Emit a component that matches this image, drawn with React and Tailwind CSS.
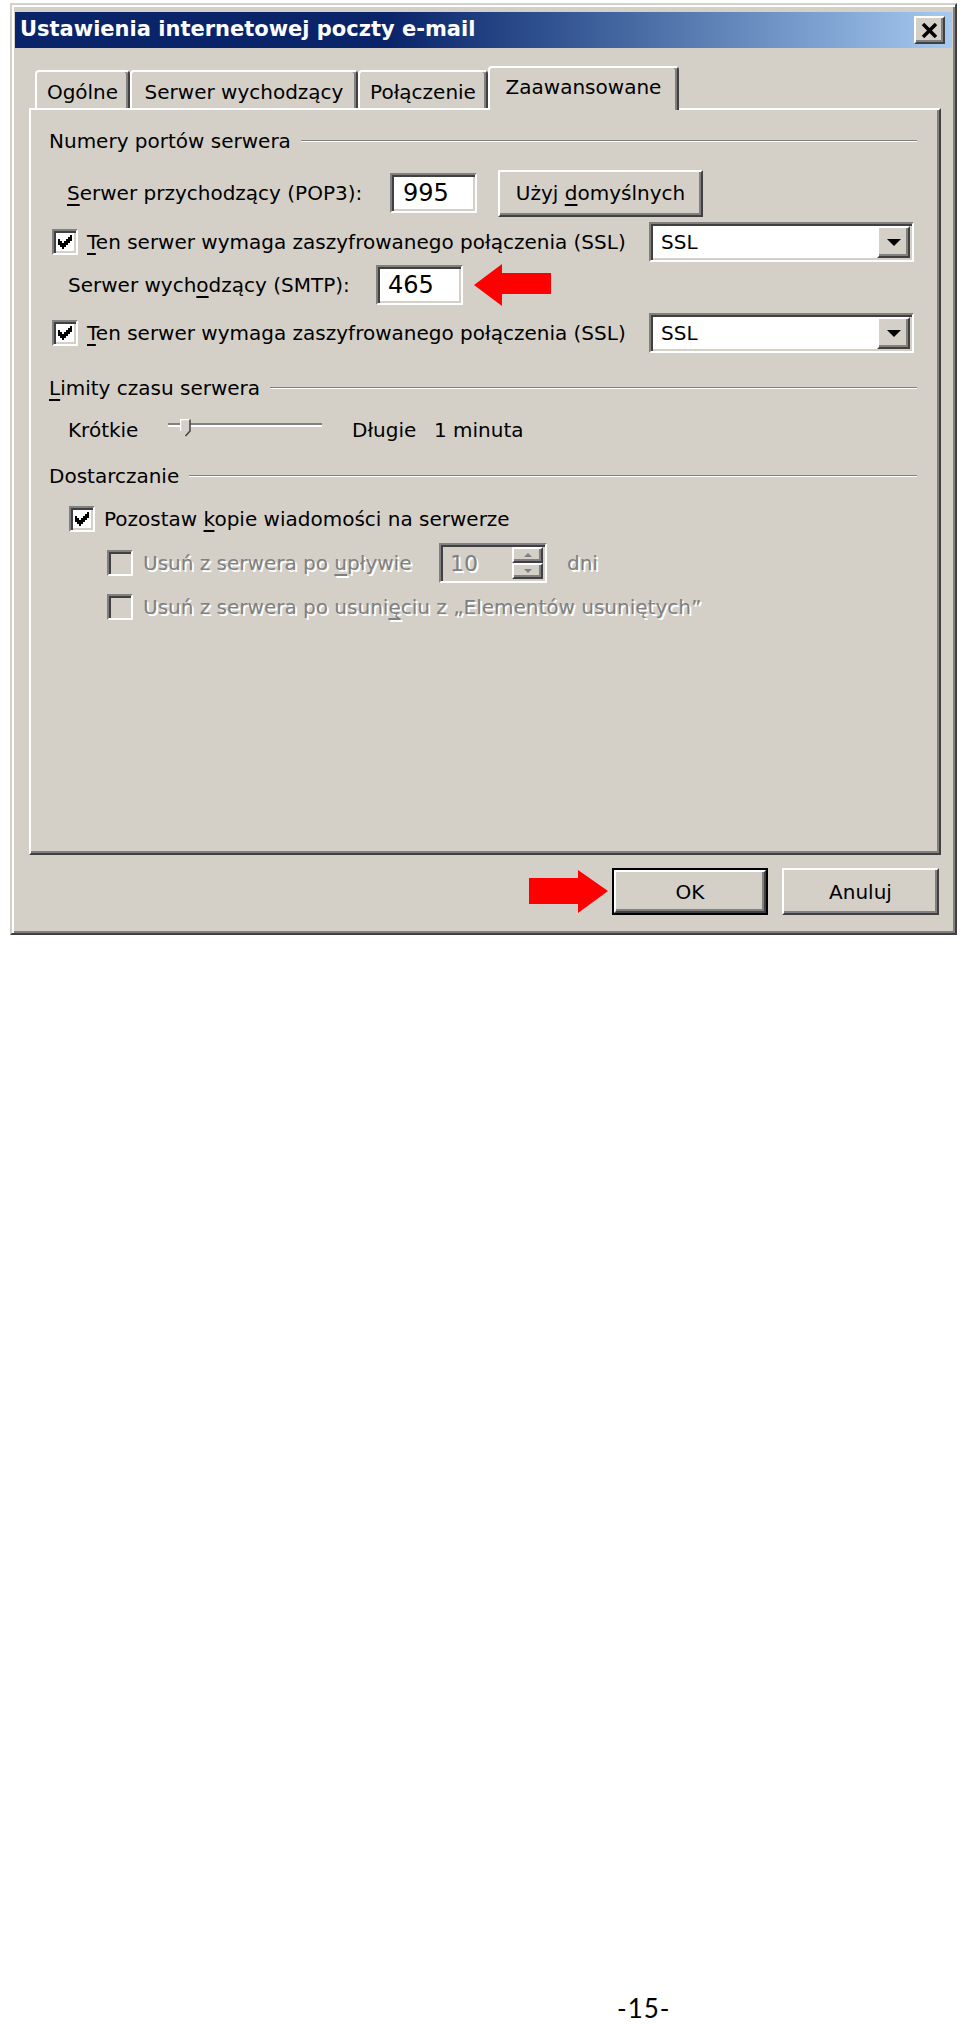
import React from "react";

// klasyczne ramki 3D (Windows 2000)
const raised =
  "border-2 border-t-white border-l-white border-r-[#404040] border-b-[#404040] shadow-[inset_-2px_-2px_0_#808080] bg-[#d4d0c8]";
const sunken =
  "border-2 border-t-[#808080] border-l-[#808080] border-r-white border-b-white shadow-[inset_2px_2px_0_#404040,inset_-2px_-2px_0_#d4d0c8]";
const dis = "text-[#808080] [text-shadow:2px_2px_0_#fff]";

function U({ children }) {
  return <span className="underline decoration-2 underline-offset-[4px]">{children}</span>;
}

function Tick() {
  const tops = [2, 3, 4, 3, 2, 1, 0];
  return (
    <svg width="22" height="22" viewBox="0 0 11 11" shapeRendering="crispEdges" className="block">
      {tops.map((t, i) => (
        <rect key={i} x={2 + i} y={2 + t} width="1" height="3" fill="#000" />
      ))}
    </svg>
  );
}

function Check({ checked, disabled }) {
  return (
    <div className={`w-[26px] h-[26px] shrink-0 ${sunken} ${disabled ? "bg-[#d4d0c8]" : "bg-white"}`}>
      {checked && <Tick />}
    </div>
  );
}

function Group({ children, className }) {
  return (
    <div className={`flex items-center h-[40px] pl-[18px] pr-[22px] ${className}`}>
      <span>{children}</span>
      <div className="flex-1 ml-[10px] border-t border-t-[#808080] border-b border-b-white" />
    </div>
  );
}

function Combo() {
  return (
    <div className={`w-[265px] h-[40px] shrink-0 bg-white ${sunken} flex items-center p-[2px]`}>
      <span className="flex-1 pl-[8px]">SSL</span>
      <div className={`w-[33px] h-full ${raised} flex items-center justify-center`}>
        <svg width="14" height="7" viewBox="0 0 14 7">
          <polygon points="0,0 14,0 7,7" fill="#000" />
        </svg>
      </div>
    </div>
  );
}

function Slider() {
  return (
    <div className="relative w-[154px] h-[40px] shrink-0">
      <div className="absolute left-0 right-0 top-[13px] h-[4px] border-t-2 border-t-[#808080] border-b-2 border-b-white" />
      <svg className="absolute left-[12px] top-[9px]" width="11" height="18" viewBox="0 0 11 18">
        <polygon points="0.5,0.5 10,0.5 10,12 5.5,17 0.5,12" fill="#d4d0c8" />
        <polyline points="0.5,12 0.5,0.5 10,0.5" fill="none" stroke="#fff" strokeWidth="1.5" />
        <polyline points="10,0.5 10,12 5.5,17" fill="none" stroke="#404040" strokeWidth="1.5" />
      </svg>
    </div>
  );
}

function Spin() {
  return (
    <div className={`w-[108px] h-[40px] shrink-0 bg-[#d4d0c8] ${sunken} flex items-center py-[2px] pr-[2px]`}>
      <span className={`flex-1 pl-[9px] text-[22px] ${dis}`}>10</span>
      <div className="w-[31px] h-full flex flex-col">
        <div className={`flex-1 ${raised} flex items-center justify-center`}>
          <svg width="8" height="4" viewBox="0 0 8 4">
            <polygon points="0,4 8,4 4,0" fill="#808080" />
          </svg>
        </div>
        <div className={`flex-1 ${raised} flex items-center justify-center`}>
          <svg width="8" height="4" viewBox="0 0 8 4">
            <polygon points="0,0 8,0 4,4" fill="#808080" />
          </svg>
        </div>
      </div>
    </div>
  );
}

function ArrowLeft() {
  return (
    <svg className="ml-[11px] shrink-0" width="78" height="42" viewBox="0 0 78 42">
      <polygon points="0,21 28,0 28,9 77,9 77,30 28,30 28,42" fill="#ff0000" />
    </svg>
  );
}

function ArrowRight() {
  return (
    <svg className="mr-[4px] shrink-0" width="80" height="43" viewBox="0 0 80 43">
      <polygon points="1,8 50,8 50,0 80,21 50,43 50,34 1,34" fill="#ff0000" />
    </svg>
  );
}

function TitleBar() {
  return (
    <div className="h-[36px] shrink-0 flex items-center justify-between bg-linear-to-r from-[#0a246a] from-40% to-[#a6caf0] pl-[5px] pr-[7px]">
      <span className="text-white font-bold text-[21px]">Ustawienia internetowej poczty e-mail</span>
      <div className={`w-[31px] h-[28px] ${raised} flex items-center justify-center`}>
        <svg width="17" height="15" viewBox="0 0 17 15">
          <path d="M2 1 L15 14 M15 1 L2 14" stroke="#000" strokeWidth="3.5" />
        </svg>
      </div>
    </div>
  );
}

function Tabs() {
  const tab =
    "h-[38px] mb-[2px] border-t-2 border-l-2 border-r-2 border-t-white border-l-white border-r-[#404040] shadow-[inset_-2px_0_0_#808080] rounded-t-[4px] flex items-center justify-center pt-[4px]";
  return (
    <div className="relative z-10 flex items-end h-[44px] -mb-[2px] pl-[6px]">
      <div className={`w-[95px] ${tab}`}>Ogólne</div>
      <div className={`w-[228px] ${tab}`}>Serwer wychodzący</div>
      <div className={`w-[130px] ${tab}`}>Połączenie</div>
      <div className="w-[191px] h-[44px] bg-[#d4d0c8] border-t-2 border-l-2 border-r-2 border-t-white border-l-white border-r-[#404040] shadow-[inset_-2px_0_0_#808080] rounded-t-[4px] flex items-center justify-center pb-[4px]">
        Zaawansowane
      </div>
    </div>
  );
}

function Panel() {
  return (
    <div className="h-[747px] shrink-0 border-2 border-t-white border-l-white border-r-[#404040] border-b-[#404040] shadow-[inset_-2px_-2px_0_#808080] flex flex-col">
      <Group className="mt-[11px]">Numery portów serwera</Group>

      <div className="flex items-center h-[40px] mt-[12px] pl-[36px]">
        <span className="w-[323px] shrink-0">
          <U>S</U>erwer przychodzący (POP3):
        </span>
        <div className={`w-[87px] h-[40px] shrink-0 bg-white ${sunken} flex items-center pl-[11px] text-[24px]`}>995</div>
        <div className={`ml-[21px] w-[205px] h-[47px] shrink-0 ${raised} flex items-center justify-center`}>
          <span>
            Użyj <U>d</U>omyślnych
          </span>
        </div>
      </div>

      <div className="flex items-center h-[40px] mt-[9px] pl-[21px]">
        <Check checked />
        <span className="ml-[9px] w-[562px] shrink-0">
          <U>T</U>en serwer wymaga zaszyfrowanego połączenia (SSL)
        </span>
        <Combo />
      </div>

      <div className="flex items-center h-[40px] mt-[3px] pl-[37px]">
        <span className="w-[308px] shrink-0">
          Serwer wych<U>o</U>dzący (SMTP):
        </span>
        <div className={`w-[87px] h-[40px] shrink-0 bg-white ${sunken} flex items-center pl-[10px] text-[24px]`}>465</div>
        <ArrowLeft />
      </div>

      <div className="flex items-center h-[40px] mt-[8px] pl-[21px]">
        <Check checked />
        <span className="ml-[9px] w-[562px] shrink-0">
          <U>T</U>en serwer wymaga zaszyfrowanego połączenia (SSL)
        </span>
        <Combo />
      </div>

      <Group className="mt-[15px]">
        <U>L</U>imity czasu serwera
      </Group>

      <div className="flex items-center h-[40px] mt-[2px] pl-[37px]">
        <span className="w-[100px] shrink-0">Krótkie</span>
        <Slider />
        <span className="ml-[30px] w-[82px] shrink-0">Długie</span>
        <span>1 minuta</span>
      </div>

      <Group className="mt-[6px]">Dostarczanie</Group>

      <div className="flex items-center h-[40px] mt-[3px] pl-[38px]">
        <Check checked />
        <span className="ml-[9px]">
          Pozostaw <U>k</U>opie wiadomości na serwerze
        </span>
      </div>

      <div className="flex items-center h-[40px] mt-[4px] pl-[76px]">
        <Check disabled />
        <span className={`ml-[10px] w-[296px] shrink-0 ${dis}`}>
          Usuń z serwera po <U>u</U>pływie
        </span>
        <Spin />
        <span className={`ml-[20px] ${dis}`}>dni</span>
      </div>

      <div className="flex items-center h-[40px] mt-[4px] pl-[76px]">
        <Check disabled />
        <span className={`ml-[10px] ${dis}`}>
          Usuń z serwera po usuni<U>ę</U>ciu z {"\u201EElementów usuniętych\u201D"}
        </span>
      </div>
    </div>
  );
}

function Buttons() {
  return (
    <div className="flex items-center justify-end mt-[13px] h-[47px] pr-[2px]">
      <ArrowRight />
      <div className="w-[156px] h-[47px] border-2 border-black">
        <div className={`w-full h-full ${raised} flex items-center justify-center`}>OK</div>
      </div>
      <div className={`ml-[14px] w-[157px] h-[47px] ${raised} flex items-center justify-center`}>Anuluj</div>
    </div>
  );
}

export default function App() {
  return (
    <div className="w-[960px] h-[2025px] bg-white overflow-hidden flex flex-col font-['DejaVu_Sans',sans-serif] text-[20px] text-black">
      <div className="ml-[10px] mt-[3px] w-[947px] h-[932px] shrink-0 bg-[#d4d0c8] border-2 border-t-[#d4d0c8] border-l-[#d4d0c8] border-r-[#404040] border-b-[#404040] shadow-[inset_2px_2px_0_#fff,inset_-2px_-2px_0_#808080] pt-[7px] px-[3px] flex flex-col">
        <TitleBar />
        <div className="ml-[14px] mt-[18px] w-[912px] flex flex-col">
          <Tabs />
          <Panel />
          <Buttons />
        </div>
      </div>
      <div className="mt-auto mb-[2px] h-[30px] shrink-0 pl-[617px] leading-[30px] text-[26px] tracking-[1px] font-['Lato',sans-serif] text-black">
        -15-
      </div>
    </div>
  );
}
